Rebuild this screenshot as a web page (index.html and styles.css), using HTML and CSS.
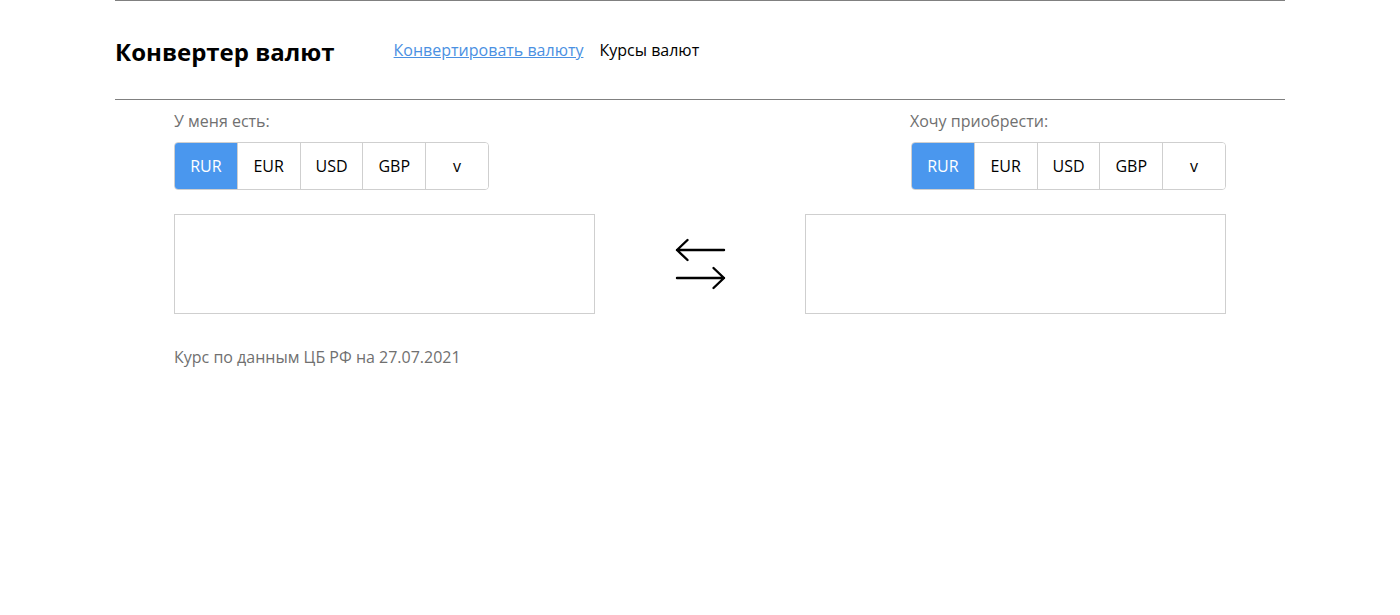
FILE: index.html
```html
<!DOCTYPE html>
<html lang="ru">
<head>
<meta charset="utf-8">
<title>Конвертер валют</title>
<link rel="stylesheet" href="styles.css">
</head>
<body>
<div class="container">
  <header class="header">
    <h1 class="title">Конвертер валют</h1>
    <nav class="nav">
      <a class="nav-link active" href="#">Конвертировать валюту</a>
      <a class="nav-link" href="#">Курсы валют</a>
    </nav>
  </header>
  <main class="main">
    <div class="converter">
      <section class="side">
        <div class="picker">
          <div class="label">У меня есть:</div>
          <div class="group">
            <button class="btn selected">RUR</button>
            <button class="btn">EUR</button>
            <button class="btn">USD</button>
            <button class="btn">GBP</button>
            <button class="btn">v</button>
          </div>
        </div>
        <div class="amount"></div>
      </section>
      <div class="swap">
        <svg class="swap-icon" width="52" height="52" viewBox="0 0 52 52" fill="none" stroke="#000" stroke-width="2.4" stroke-linecap="round" stroke-linejoin="round">
          <path d="M3 12H50M13.5 2L3 12L13.5 22"/>
          <path d="M3 40H50M39.5 30L50 40L39.5 50"/>
        </svg>
      </div>
      <section class="side side-right">
        <div class="picker">
          <div class="label label-right">Хочу приобрести:</div>
          <div class="group">
            <button class="btn selected">RUR</button>
            <button class="btn">EUR</button>
            <button class="btn">USD</button>
            <button class="btn">GBP</button>
            <button class="btn">v</button>
          </div>
        </div>
        <div class="amount"></div>
      </section>
    </div>
    <p class="note">Курс по данным ЦБ РФ на 27.07.2021</p>
  </main>
</div>
</body>
</html>
```
FILE: styles.css
```css
* { box-sizing: border-box; }
body {
  margin: 0;
  font-family: "Open Sans", "Noto Sans", sans-serif;
  color: #000;
  background: #fff;
}
.container {
  width: 1170px;
  margin: 0 auto;
  border-top: 1px solid #808080;
}
.header {
  display: flex;
  align-items: center;
  height: 99px;
  border-bottom: 1px solid #808080;
}
.title {
  margin: 0 59px 0 0;
  font-size: 24px;
  font-weight: 700;
  line-height: 1;
  position: relative;
  top: 2px;
}
.nav {
  display: flex;
  gap: 16px;
  font-size: 16px;
}
.nav-link {
  color: #000;
  text-decoration: none;
}
.nav-link.active {
  color: #4a90e2;
  text-decoration: underline;
}
.main {
  padding: 0 59px;
}
.converter {
  display: flex;
  justify-content: space-between;
  align-items: flex-end;
}
.side {
  width: 421px;
  display: flex;
  flex-direction: column;
}
.side-right { align-items: flex-end; }
.side-right .amount { align-self: stretch; }
.label {
  font-size: 16px;
  line-height: 22px;
  color: #707070;
  margin-top: 10px;
  margin-bottom: 10px;
}
.label-right { margin-left: -1px; }
.group {
  display: flex;
  border: 1px solid #cfcfcf;
  border-radius: 4px;
  overflow: hidden;
  width: 315px;
}
.btn {
  flex: 1;
  height: 46px;
  border: 0;
  border-left: 1px solid #cfcfcf;
  background: #fff;
  font-family: inherit;
  font-size: 16px;
  color: #000;
  padding: 0;
}
.btn:first-child { border-left: 0; }
.btn.selected {
  background: #4a97ee;
  color: #fff;
}
.amount {
  margin-top: 24px;
  height: 100px;
  border: 1px solid #cfcfcf;
}
.swap {
  height: 100px;
  display: flex;
  align-items: center;
  justify-content: center;
}
.swap-icon {
  flex: none;
  display: block;
}
.note {
  margin: 32px 0 0;
  font-size: 16px;
  line-height: 22px;
  color: #707070;
}
```
